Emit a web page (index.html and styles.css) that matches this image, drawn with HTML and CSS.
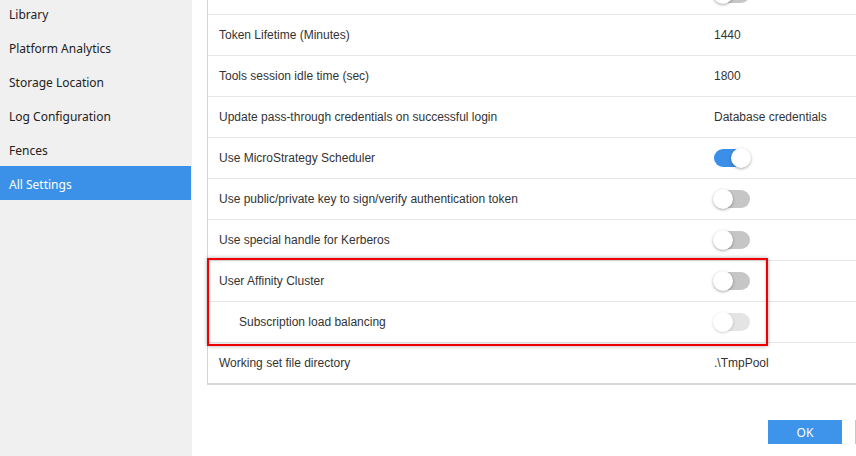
FILE: index.html
```html
<!DOCTYPE html>
<html lang="en">
<head>
    <meta charset="UTF-8">
    <title>All Settings</title>
    <link rel="stylesheet" href="styles.css">
</head>
<body>
    <div class="sidebar">
        <div class="nav-item">Library</div>
        <div class="nav-item">Platform Analytics</div>
        <div class="nav-item">Storage Location</div>
        <div class="nav-item">Log Configuration</div>
        <div class="nav-item">Fences</div>
        <div class="nav-item active">All Settings</div>
    </div>

    <div class="main">
        <div class="settings">
            <div class="row">
                <div class="label"></div>
                <div class="value"><span class="toggle"></span></div>
            </div>
            <div class="row">
                <div class="label">Token Lifetime (Minutes)</div>
                <div class="value">1440</div>
            </div>
            <div class="row">
                <div class="label">Tools session idle time (sec)</div>
                <div class="value">1800</div>
            </div>
            <div class="row">
                <div class="label">Update pass-through credentials on successful login</div>
                <div class="value">Database credentials</div>
            </div>
            <div class="row">
                <div class="label">Use MicroStrategy Scheduler</div>
                <div class="value"><span class="toggle on"></span></div>
            </div>
            <div class="row">
                <div class="label">Use public/private key to sign/verify authentication token</div>
                <div class="value"><span class="toggle"></span></div>
            </div>
            <div class="row">
                <div class="label">Use special handle for Kerberos</div>
                <div class="value"><span class="toggle"></span></div>
            </div>
            <div class="group highlight">
                <div class="row">
                    <div class="label">User Affinity Cluster</div>
                    <div class="value"><span class="toggle"></span></div>
                </div>
                <div class="row">
                    <div class="label sub">Subscription load balancing</div>
                    <div class="value"><span class="toggle disabled"></span></div>
                </div>
            </div>
            <div class="row last">
                <div class="label">Working set file directory</div>
                <div class="value">.\TmpPool</div>
            </div>
        </div>

        <div class="footer">
            <button class="btn primary">OK</button>
            <button class="btn"></button>
        </div>
    </div>
</body>
</html>
```

FILE: styles.css
```css
* {
    margin: 0;
    padding: 0;
    box-sizing: border-box;
}

body {
    display: flex;
    height: 456px;
    overflow: hidden;
    background-color: #ffffff;
    font-family: 'Noto Sans', 'Open Sans', sans-serif;
}

.sidebar {
    width: 192px;
    flex-shrink: 0;
    background-color: #f0f0f0;
    padding-right: 1px;
}

.nav-item {
    height: 34px;
    line-height: 33px;
    padding-top: 2px;
    padding-left: 9px;
    font-size: 12px;
    color: #222;
}

.nav-item:first-child {
    margin-top: -4px;
}

.nav-item.active {
    background-color: #3b91e8;
    color: #fff;
}

.main {
    flex: 1;
    padding-left: 15px;
    overflow: hidden;
}

.settings {
    width: 720px;
    margin-top: -26px;
    border-left: 1px solid #d4d4d4;
    border-bottom: 2px solid #d8d8d8;
    font-family: 'Liberation Sans', Arial, sans-serif;
    font-size: 12px;
    color: #333;
}

.row {
    display: grid;
    grid-template-columns: 506px 1fr;
    align-items: center;
    height: 41px;
    border-bottom: 1px solid #e6e6e6;
}

.row.last {
    border-bottom: none;
    height: 40px;
}

.label {
    padding-left: 11px;
}

.label.sub {
    padding-left: 31px;
}

.group {
    position: relative;
}

.highlight::after {
    content: '';
    position: absolute;
    left: -1px;
    top: -3px;
    bottom: -3px;
    width: 557px;
    border: 2px solid #f00000;
    box-shadow: 0 0 4px rgba(0, 0, 0, 0.35), inset 0 0 3px rgba(0, 0, 0, 0.25);
}

/* switches */
.toggle {
    display: block;
    position: relative;
    width: 36px;
    height: 18px;
    border-radius: 9px;
    background-color: #c6c6c6;
}

.toggle::before {
    content: '';
    position: absolute;
    left: -1px;
    top: -1px;
    width: 20px;
    height: 20px;
    border-radius: 50%;
    background-color: #fff;
    box-shadow: 0 1px 3px rgba(0, 0, 0, 0.35);
}

.toggle.on {
    background-color: #3b8fe8;
}

.toggle.on::before {
    left: auto;
    right: -1px;
}

.toggle.disabled {
    background-color: #e4e4e4;
}

.toggle.disabled::before {
    box-shadow: 0 1px 3px rgba(0, 0, 0, 0.18);
}

.footer {
    display: flex;
    gap: 13px;
    padding-top: 35px;
    padding-left: 561px;
}

.btn {
    width: 74px;
    height: 24px;
    flex-shrink: 0;
    border: 1px solid #c8c8c8;
    background-color: #fff;
    font-family: 'Noto Sans', 'Open Sans', sans-serif;
    font-size: 12px;
    color: #333;
}

.btn.primary {
    border-color: #3d94ea;
    background-color: #3d94ea;
    color: #fff;
}
```
